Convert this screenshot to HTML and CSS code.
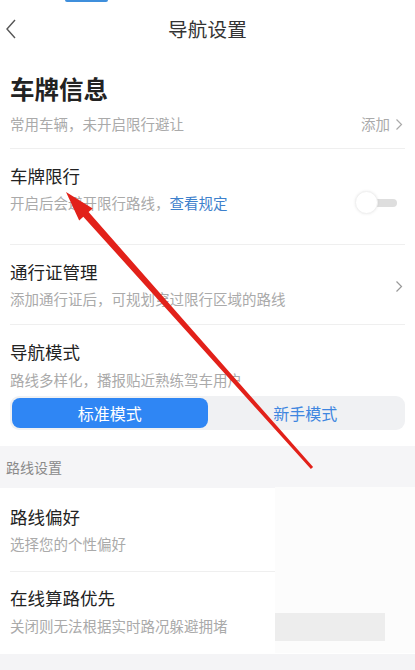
FILE: index.html
```html
<!DOCTYPE html>
<html lang="zh-CN">

<head>
    <meta charset="UTF-8">
    <meta name="viewport" content="width=device-width, initial-scale=1.0">
    <title>导航设置</title>
    <link rel="stylesheet" href="styles.css">
</head>

<body>
    <div class="page">
        <i class="top_tab"></i>
        <div class="header">
            <svg class="back" width="12" height="22" viewBox="0 0 12 22">
                <path d="M10 2 L2 11 L10 20" fill="none" stroke="#555" stroke-width="1.4" />
            </svg>
            <div class="header_title">导航设置</div>
        </div>

        <div class="plate">
            <div class="plate_title">车牌信息</div>
            <div class="plate_row">
                <span class="sub">常用车辆，未开启限行避让</span>
                <span class="add">添加
                    <svg width="8" height="13" viewBox="0 0 8 13">
                        <path d="M1.5 1.5 L6.5 6.5 L1.5 11.5" fill="none" stroke="#aaa" stroke-width="1.2" />
                    </svg>
                </span>
            </div>
        </div>

        <div class="item limit">
            <div class="item_text">
                <div class="title">车牌限行</div>
                <div class="sub">开启后会避开限行路线，<span class="link">查看规定</span></div>
            </div>
            <div class="switch">
                <i class="track"></i>
                <i class="knob"></i>
            </div>
        </div>

        <div class="item pass">
            <div class="item_text">
                <div class="title">通行证管理</div>
                <div class="sub">添加通行证后，可规划穿过限行区域的路线</div>
            </div>
            <svg class="arrow_right" width="8" height="13" viewBox="0 0 8 13">
                <path d="M1.5 1.5 L6.5 6.5 L1.5 11.5" fill="none" stroke="#999" stroke-width="1.2" />
            </svg>
        </div>

        <div class="item mode">
            <div class="item_text">
                <div class="title">导航模式</div>
                <div class="sub">路线多样化，播报贴近熟练驾车用户</div>
                <div class="segment">
                    <div class="seg active">标准模式</div>
                    <div class="seg">新手模式</div>
                </div>
            </div>
        </div>

        <div class="band">路线设置</div>

        <div class="item prefer">
            <div class="item_text">
                <div class="title">路线偏好</div>
                <div class="sub">选择您的个性偏好</div>
            </div>
        </div>

        <div class="item online">
            <div class="item_text">
                <div class="title">在线算路优先</div>
                <div class="sub">关闭则无法根据实时路况躲避拥堵</div>
            </div>
        </div>

        <div class="bottom_band"></div>

        <!-- watermark patches -->
        <div class="patch"></div>
        <div class="blur"></div>

        <!-- red annotation arrow -->
        <svg class="mark" width="415" height="670" viewBox="0 0 415 670">
            <polygon fill="#e2211a"
                points="66,192 92.7,208.4 88.6,212.1 313.1,467 310.9,469 83.3,216.7 79.2,220.4" />
        </svg>
    </div>
</body>

</html>
```

FILE: styles.css
```css
* {
    margin: 0;
    padding: 0;
    box-sizing: border-box;
}

body {
    font-family: "Noto Sans CJK SC", "Noto Sans", sans-serif;
    background: #fff;
    color: #222;
}

.page {
    width: 415px;
    height: 670px;
    position: relative;
    overflow: hidden;
    background: #fff;
}

.top_tab {
    position: absolute;
    left: 65px;
    top: 0;
    width: 43px;
    height: 2px;
    background: #3f8fdc;
    border-radius: 0 0 3px 3px;
}

.header {
    height: 58px;
    display: flex;
    align-items: center;
    justify-content: center;
    position: relative;
}

.back {
    position: absolute;
    left: 5px;
    top: 18px;
}

.header_title {
    font-size: 19.5px;
    line-height: 26px;
    color: #333;
    letter-spacing: 0.2px;
}

.plate {
    margin: 0 10px;
    padding: 14px 0 14px;
    border-bottom: 1px solid #efefef;
}

.plate_title {
    font-size: 24.5px;
    font-weight: bold;
    line-height: 34px;
    color: #222;
}

.plate_row {
    margin-top: 8px;
    display: flex;
    justify-content: space-between;
    align-items: center;
}

.add {
    font-size: 14.5px;
    line-height: 20px;
    color: #aaa;
    display: flex;
    align-items: center;
    gap: 5px;
    margin-right: 2px;
}

.item {
    margin: 0 10px;
    display: flex;
    justify-content: space-between;
    border-bottom: 1px solid #efefef;
}

.item_text {
    flex: 1;
}

.title {
    font-size: 17.5px;
    line-height: 22px;
    color: #222;
}

.sub {
    font-size: 14.5px;
    line-height: 20px;
    color: #aaa;
}

.item .sub {
    margin-top: 6px;
}

.link {
    color: #3d80cc;
}

.limit {
    padding: 16px 0 29px;
}

.switch {
    position: relative;
    width: 42px;
    height: 24px;
    margin: 26px 8px 0 0;
}

.track {
    position: absolute;
    right: 0;
    top: 8px;
    width: 26px;
    height: 8px;
    border-radius: 4px;
    background: #dedede;
}

.knob {
    position: absolute;
    left: 0;
    top: 0;
    width: 23px;
    height: 23px;
    border-radius: 50%;
    background: #fff;
    border: 1px solid #f0f0f0;
    box-shadow: 0 0 3px rgba(0, 0, 0, .08);
}

.pass {
    padding: 16px 0 15px;
    align-items: center;
}

.arrow_right {
    margin-right: 2px;
    margin-top: 2px;
}

.mode {
    padding: 16px 0 16px;
    border-bottom: none;
}

.mode .sub {
    margin-top: 7px;
}

.segment {
    margin-top: 6px;
    height: 34px;
    padding: 2px;
    display: flex;
    background: #f0f1f3;
    border-radius: 9px;
}

.seg {
    flex: 1;
    display: flex;
    align-items: center;
    justify-content: center;
    font-size: 16px;
    color: #3f86e0;
    border-radius: 8px;
}

.seg.active {
    background: #2f86f4;
    color: #fff;
}

.band {
    height: 42px;
    background: #f5f5f7;
    display: flex;
    align-items: center;
    padding-left: 6px;
    font-size: 14px;
    color: #8a8a8a;
}

.prefer {
    padding: 18px 0 17px;
}

.online {
    padding: 15px 0 18px;
    border-bottom: none;
}

.online .sub {
    margin-top: 7px;
}

.bottom_band {
    height: 20px;
    background: #f4f4f6;
}

.patch {
    position: absolute;
    left: 275px;
    top: 487px;
    width: 140px;
    height: 166px;
    background: #fcfcfc;
}

.blur {
    position: absolute;
    left: 275px;
    top: 613px;
    width: 110px;
    height: 28px;
    background: #ededed;
}

.mark {
    position: absolute;
    left: 0;
    top: 0;
    pointer-events: none;
}
```
